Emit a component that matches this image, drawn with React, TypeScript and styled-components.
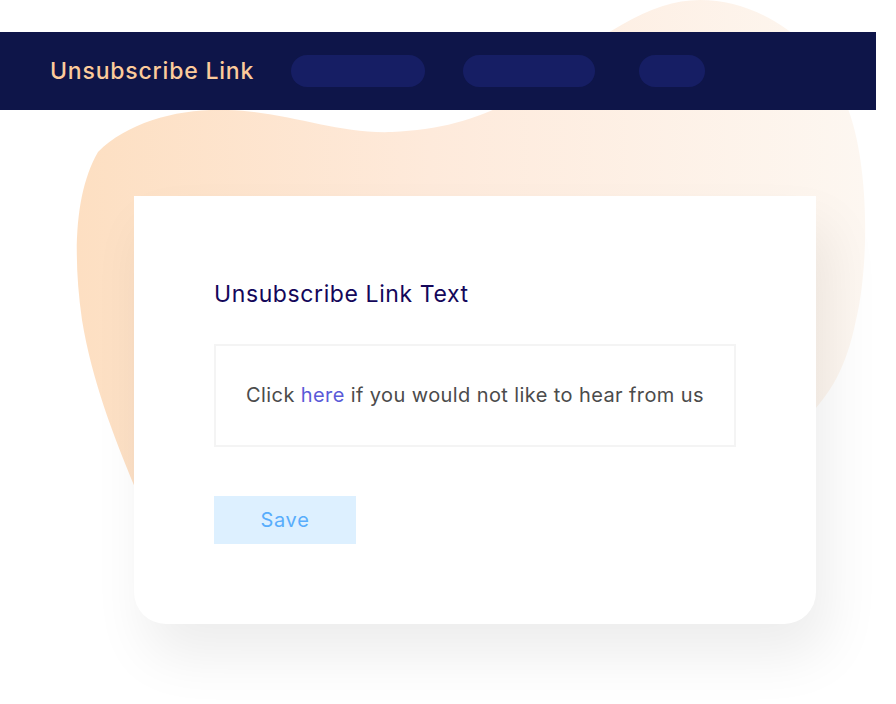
import React from 'react';
import styled, { createGlobalStyle } from 'styled-components';

// page setup
const GlobalStyle = createGlobalStyle`
  html, body {
    margin: 0;
    padding: 0;
    background: #ffffff;
  }
  body {
    font-family: Inter, "Open Sans", "Liberation Sans", sans-serif;
  }
`;

const Page = styled.div`
  position: relative;
  width: 896px;
  height: 704px;
  overflow: hidden;
  background: #ffffff;
`;

const Blob = styled.svg`
  position: absolute;
  left: 0;
  top: 0;
  z-index: 0;
`;

const Content = styled.div`
  position: relative;
  z-index: 1;
  padding-top: 32px;
`;

// header bar
const TopBar = styled.header`
  width: 876px;
  height: 78px;
  box-sizing: border-box;
  padding-left: 50px;
  display: flex;
  align-items: center;
  background: #0e1549;
`;

const BarTitle = styled.h1`
  margin: 0;
  font-size: 23px;
  font-weight: 500;
  letter-spacing: 0.8px;
  color: #fccb9b;
`;

const Pill = styled.span<{ w: number; gap: number }>`
  display: block;
  width: ${p => p.w}px;
  height: 32px;
  margin-left: ${p => p.gap}px;
  border-radius: 16px;
  background: #161e64;
`;

// card
const Card = styled.section`
  margin: 86px 0 0 134px;
  width: 682px;
  height: 428px;
  box-sizing: border-box;
  padding: 81px 0 0 80px;
  background: #ffffff;
  border-radius: 0 0 32px 32px;
  box-shadow: 12px 32px 55px rgba(0, 0, 0, 0.075);
`;

const Heading = styled.h2`
  margin: 0;
  font-size: 23px;
  line-height: 34px;
  font-weight: 400;
  letter-spacing: 0.6px;
  color: #14075a;
`;

const TextBox = styled.div`
  margin-top: 33px;
  width: 522px;
  height: 103px;
  box-sizing: border-box;
  border: 2px solid #f4f4f4;
  display: flex;
  align-items: center;
  justify-content: center;
  padding-bottom: 2px;
  font-size: 20px;
  letter-spacing: 0.4px;
  color: #4b4b4b;
`;

const LinkWord = styled.span`
  color: #5a5ad8;
`;

const SaveButton = styled.button`
  margin-top: 49px;
  width: 142px;
  height: 48px;
  border: none;
  background: #ddf0ff;
  color: #58adfc;
  font-family: inherit;
  font-size: 20px;
  letter-spacing: 0.7px;
  cursor: pointer;
`;

const App: React.FC = () => {
  return (
    <Page>
      <GlobalStyle />
      <Blob width="896" height="704" viewBox="0 0 896 704">
        <defs>
          <linearGradient id="blobFill" x1="0" y1="0" x2="1" y2="0">
            <stop offset="0" stopColor="#fddfc2" />
            <stop offset="0.45" stopColor="#feeadb" />
            <stop offset="1" stopColor="#fdf7f1" />
          </linearGradient>
        </defs>
        <path
          d="M 700 0 C 760 0, 815 40, 842 95 C 870 150, 870 262, 856 320 C 846 368, 832 392, 805 420 L 500 500 L 136 490 C 112 432, 92 380, 82 320 C 72 250, 76 190, 98 152 C 128 122, 180 108, 228 110 C 290 112, 335 134, 392 132 C 445 130, 490 116, 525 92 C 600 35, 650 0, 700 0 Z"
          fill="url(#blobFill)"
        />
      </Blob>
      <Content>
        <TopBar>
          <BarTitle>Unsubscribe Link</BarTitle>
          <Pill w={134} gap={37} />
          <Pill w={132} gap={38} />
          <Pill w={66} gap={44} />
        </TopBar>
        <Card>
          <Heading>Unsubscribe Link Text</Heading>
          <TextBox>
            <span>
              Click <LinkWord>here</LinkWord> if you would not like to hear from us
            </span>
          </TextBox>
          <SaveButton>Save</SaveButton>
        </Card>
      </Content>
    </Page>
  );
};

export default App;
